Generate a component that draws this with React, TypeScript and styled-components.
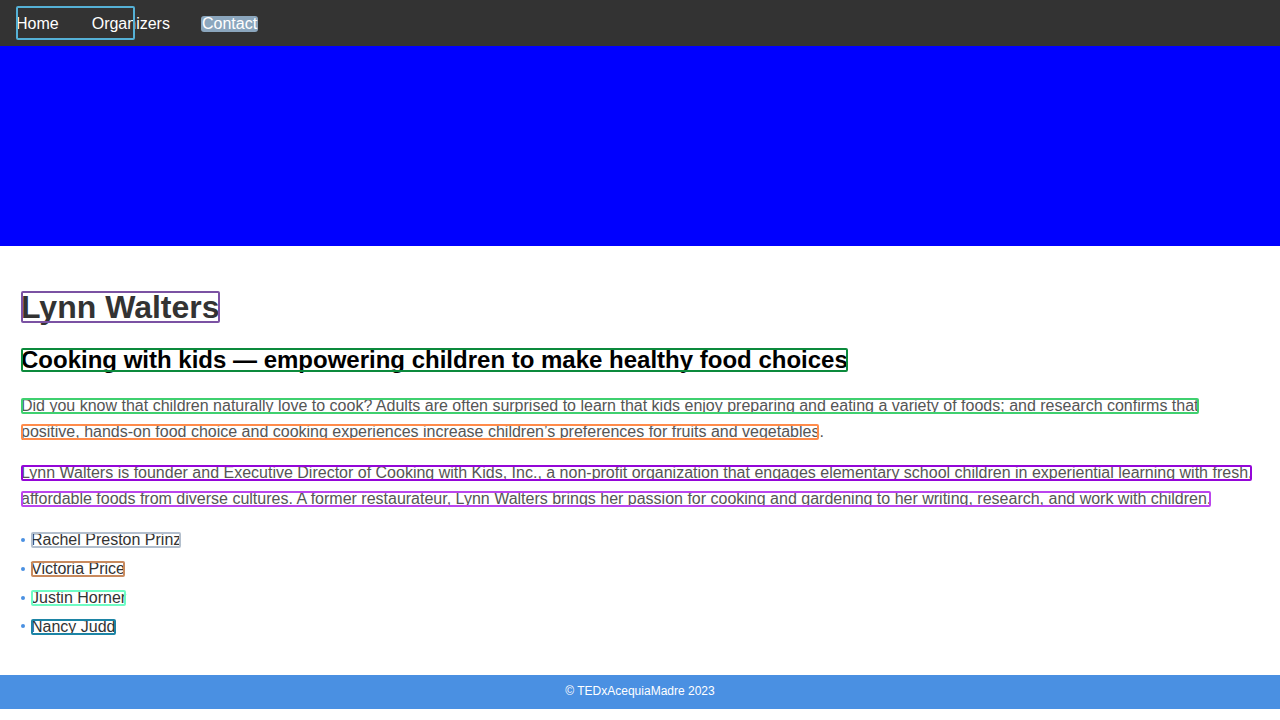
import React from "react";
import styled, { createGlobalStyle } from "styled-components";

const GlobalStyle = createGlobalStyle`
  html, body { margin: 0; padding: 0; background: #ffffff; }
  body { font-family: "Liberation Sans", Arial, sans-serif; color: #333333; }
`;

const Marked = styled.span<{ $c: string }>`
  position: relative;
  display: inline-block;
  line-height: 1;
  &::after {
    content: "";
    position: absolute;
    inset: 0;
    border: 2px solid ${(p) => p.$c};
    border-radius: 2px;
    pointer-events: none;
  }
`;

const Nav = styled.nav`
  position: relative;
  display: flex;
  align-items: center;
  height: 46px;
  padding: 2px 16px 0;
  background: #333333;
  box-sizing: border-box;
`;

const NavLink = styled.a`
  color: #ffffff;
  font-size: 16px;
  text-decoration: none;
  margin-right: 33px;
  line-height: 1.15;
`;

const NavMark = styled.span`
  position: absolute;
  left: 16px;
  top: 6px;
  width: 119px;
  height: 34px;
  box-sizing: border-box;
  border: 2px solid #55b1d6;
  border-radius: 2px;
  pointer-events: none;
`;

const FilledLabel = styled.span`
  display: inline-block;
  line-height: 14px;
  height: 14px;
  margin-left: -1px;
  background: #8ba6bd;
  border-radius: 2px;
  box-shadow: 0 0 0 1px #8ba6bd;
`;

const Hero = styled.div`
  height: 200px;
  background: #0000ff;
`;

const Main = styled.main`
  padding: 43px 21px 20px;
`;

const Title = styled.h1`
  margin: 0 0 20px;
  font-size: 32px;
  font-weight: bold;
  color: #333333;
  line-height: normal;
`;

const Subtitle = styled.h2`
  margin: 0 0 19px;
  font-size: 24px;
  font-weight: bold;
  color: #000000;
  line-height: normal;
`;

const Para = styled.div`
  margin: 0 0 16px;
  font-size: 16px;
  line-height: 1.6;
  color: #555555;
`;

const Line = styled.div`
  white-space: nowrap;
`;

const List = styled.ul`
  list-style: none;
  margin: 16px 0 16px;
  padding: 0;
`;

const Item = styled.li`
  display: block;
  font-size: 16px;
  line-height: 25.6px;
  height: 25.6px;
  color: #333333;
  & + & { margin-top: 3.2px; }
  &::before {
    content: "";
    display: inline-block;
    vertical-align: middle;
    width: 4px;
    height: 4px;
    border-radius: 50%;
    background: #4a90e2;
    margin: -2px 6px 0 0;
  }
`;

const Footer = styled.footer`
  background: #4a90e2;
  color: #ffffff;
  text-align: center;
  font-size: 12px;
  padding: 10px 0;
  line-height: 1.15;
`;

const organizers = [
  { name: "Rachel Preston Prinz", c: "#b3bfcd" },
  { name: "Victoria Price", c: "#c88a5e" },
  { name: "Justin Horner", c: "#6ffcc4" },
  { name: "Nancy Judd", c: "#1c84a5" },
];

export default function App() {
  return (
    <>
      <GlobalStyle />
      <Nav>
        <NavLink href="#">Home</NavLink>
        <NavLink href="#">Organizers</NavLink>
        <NavLink href="#">
          <FilledLabel>Contact</FilledLabel>
        </NavLink>
        <NavMark />
      </Nav>
      <Hero />
      <Main>
        <Title>
          <Marked $c="#7b52a3">Lynn Walters</Marked>
        </Title>
        <Subtitle>
          <Marked $c="#0c8a3c">
            Cooking with kids — empowering children to make healthy food choices
          </Marked>
        </Subtitle>
        <Para>
          <Line>
            <Marked $c="#3fd06f">
              Did you know that children naturally love to cook? Adults are often surprised to learn that kids enjoy preparing and eating a variety of foods; and research confirms that
            </Marked>
          </Line>
          <Line>
            <Marked $c="#ff8b4a">
              positive, hands-on food choice and cooking experiences increase children’s preferences for fruits and vegetables
            </Marked>
            .
          </Line>
        </Para>
        <Para>
          <Line>
            <Marked $c="#9406d8">
              Lynn Walters is founder and Executive Director of Cooking with Kids, Inc., a non-profit organization that engages elementary school children in experiential learning with fresh,
            </Marked>
          </Line>
          <Line>
            <Marked $c="#bb45ee">
              affordable foods from diverse cultures. A former restaurateur, Lynn Walters brings her passion for cooking and gardening to her writing, research, and work with children.
            </Marked>
          </Line>
        </Para>
        <List>
          {organizers.map((o) => (
            <Item key={o.name}>
              <Marked $c={o.c}>{o.name}</Marked>
            </Item>
          ))}
        </List>
      </Main>
      <Footer>© TEDxAcequiaMadre 2023</Footer>
    </>
  );
}
